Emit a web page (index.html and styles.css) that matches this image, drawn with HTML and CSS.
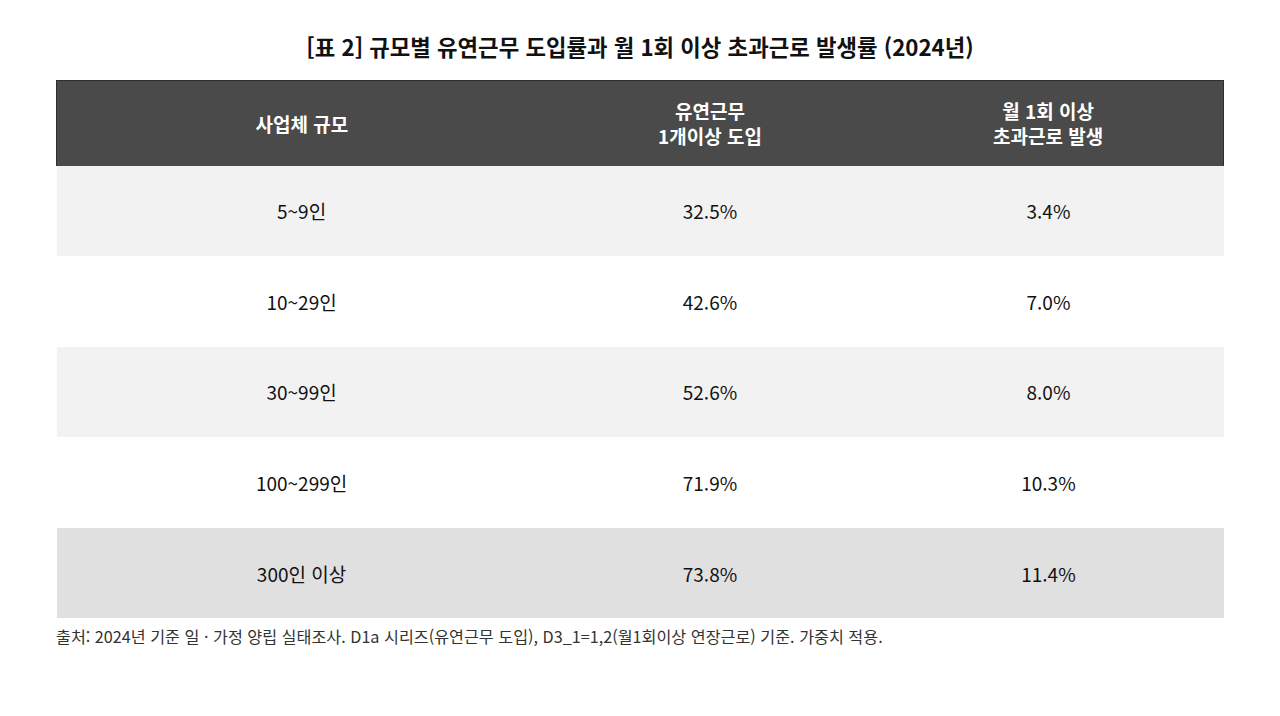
FILE: index.html
```html
<!DOCTYPE html>
<html lang="ko">
<head>
<meta charset="utf-8">
<link rel="stylesheet" href="styles.css">
</head>
<body>
<div class="page">
  <h1 class="title">[표 2] 규모별 유연근무 도입률과 월 1회 이상 초과근로 발생률 (2024년)</h1>
  <table class="data">
    <colgroup><col class="c1"><col class="c2"><col class="c3"></colgroup>
    <thead>
      <tr><th>사업체 규모</th><th>유연근무<br>1개이상 도입</th><th>월 1회 이상<br>초과근로 발생</th></tr>
    </thead>
    <tbody>
      <tr class="alt"><td>5~9인</td><td>32.5%</td><td>3.4%</td></tr>
      <tr><td>10~29인</td><td>42.6%</td><td>7.0%</td></tr>
      <tr class="alt"><td>30~99인</td><td>52.6%</td><td>8.0%</td></tr>
      <tr><td>100~299인</td><td>71.9%</td><td>10.3%</td></tr>
      <tr class="last"><td>300인 이상</td><td>73.8%</td><td>11.4%</td></tr>
    </tbody>
  </table>
  <p class="note">출처: 2024년 기준 일 · 가정 양립 실태조사. D1a 시리즈(유연근무 도입), D3_1=1,2(월1회이상 연장근로) 기준. 가중치 적용.</p>
</div>
</body>
</html>
```
FILE: styles.css
```css
html, body { margin: 0; padding: 0; background: #fff; }
body { font-family: "Noto Sans CJK KR", "Noto Sans", sans-serif; color: #111; }
.page { padding: 30px 56px 0 56px; }
.title { margin: 0 0 18px 0; text-align: center; font-size: 22.3px; font-weight: 700; line-height: 32px; color: #111; }
.data { width: 100%; border-collapse: collapse; table-layout: fixed; }
.c1 { width: 42%; }
.c2 { width: 28%; }
.c3 { width: 30%; }
.data th { background: #4a4a4a; color: #fff; font-size: 19px; font-weight: 700; line-height: 25px; height: 85px; padding: 0; box-sizing: border-box; border-top: 1px solid #2e2e2e; }
.data th:first-child { border-left: 1px solid #2e2e2e; }
.data th:last-child { border-right: 1px solid #2e2e2e; }
.data td { text-align: center; font-size: 19px; height: 90.6px; padding: 0; color: #111; }
.data tr.alt td { background: #f2f2f2; }
.data tr.last td { background: #e0e0e0; }
.note { margin: 7px 0 0 0; font-size: 16.2px; line-height: 22px; color: #333; }
```
